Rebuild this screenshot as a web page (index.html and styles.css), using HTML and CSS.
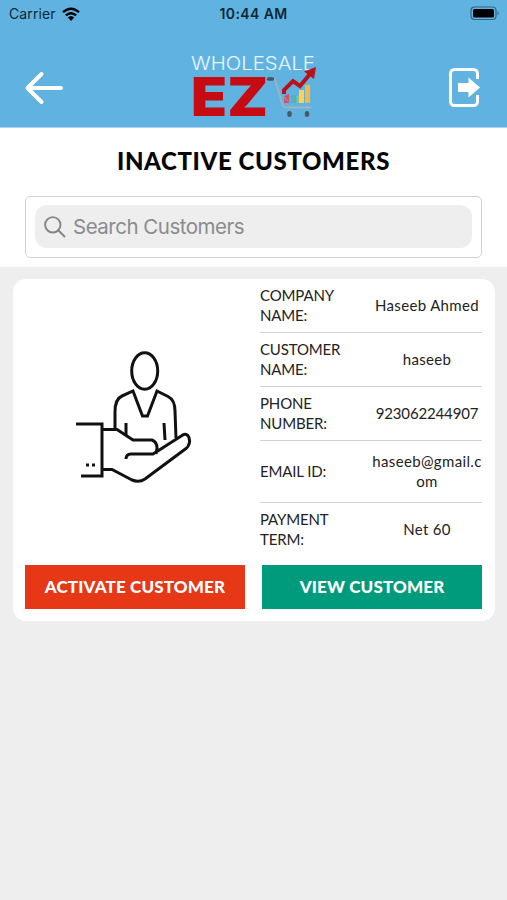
FILE: index.html
```html
<!DOCTYPE html>
<html lang="en">
<head>
<meta charset="utf-8">
<title>Inactive Customers</title>
<link rel="stylesheet" href="styles.css">
</head>
<body>
<header class="header">
  <div class="status">
    <div class="carrier"><span class="carrier-name">Carrier</span>
      <svg width="18" height="14" viewBox="0 0 18 14" fill="none" stroke="#000" stroke-width="2.4"><path d="M1 5.2Q9-1.8 17 5.2M3.800 8.400Q9 4 14.200 8.400"/><path d="M5.800 10.600Q9 7.600 12.200 10.600L9 14z" fill="#000" stroke="none"/></svg>
    </div>
    <span class="time">10:44 AM</span>
    <svg class="battery" width="31" height="15" viewBox="0 0 31 15"><rect x="1" y="1" width="25" height="12.5" rx="3.5" fill="none" stroke="#35657e" stroke-width="1.2"/><rect x="3" y="3" width="21" height="8.5" rx="1.5"/><path d="M27.5 5Q30 7.2 27.5 9.5z" fill="#35657e"/></svg>
  </div>
  <div class="nav">
    <svg class="back" width="40" height="34" viewBox="0 0 40 34" fill="none" stroke="#fff" stroke-width="4" stroke-linecap="round" stroke-linejoin="round"><path d="M37 17H4M17.5 3L3.5 17l14 14"/></svg>
    <svg class="logo" width="128" height="66" viewBox="0 0 128 66">
      <text class="logo-top" x="2" y="18.500" textLength="124" lengthAdjust="spacingAndGlyphs">WHOLESALE</text>
      <text class="logo-main" transform="translate(0 64.500) scale(1.400 1)" x="1.500" y="0" textLength="55" lengthAdjust="spacingAndGlyphs">EZ</text>
      <path d="M82 27.500q4 0 5 4l6 21q1 4 5 4h24" fill="none" stroke="#9fb4c0" stroke-width="1.800"/>
      <path d="M79.500 28h4" stroke="#45565f" stroke-width="3.400" stroke-linecap="round"/>
      <path d="M95 47l6 5h-6z" fill="#e14b64"/><path d="M95 45l5-2v8z" fill="#e14b64"/><path d="M102 44h5v8h-5z" fill="#4cb7b4"/><path d="M108 45h5v7h-5z" fill="#9cc06a"/><path d="M110 39h5v13h-5z" fill="#ffd05c"/><path d="M116 34h5v18h-5z" fill="#f4b943"/>
      <path d="M95 43V39L104 30l7 5 10-12" fill="none" stroke="#b9121b" stroke-width="4"/><path d="M115 20.500l12-4.500-2 12z" fill="#b9121b"/>
      <ellipse cx="100.500" cy="63" rx="2.300" ry="2.900" fill="#4b5960"/><ellipse cx="118" cy="63" rx="2.300" ry="2.900" fill="#4b5960"/>
    </svg>
    <svg class="exit" width="32" height="40" viewBox="0 0 32 40"><path d="M28.500 11V5.500a4 4 0 0 0-4-4h-19a4 4 0 0 0-4 4v28a4 4 0 0 0 4 4h19a4 4 0 0 0 4-4V27" fill="none" stroke="#fff" stroke-width="3"/><path d="M9 15h10.500V9.500L31 19.500 19.500 29.500V24H9z" fill="#fff"/></svg>
  </div>
</header>
<section class="top">
  <h1 class="title">INACTIVE CUSTOMERS</h1>
  <div class="search-box">
    <div class="search">
      <svg width="22" height="22" viewBox="0 0 22 22" fill="none" stroke="#858587" stroke-width="1.9" stroke-linecap="round"><circle cx="8.8" cy="8.8" r="7.7"/><path d="M14.5 14.5l6 6"/></svg>
      <span class="placeholder">Search Customers</span>
    </div>
  </div>
</section>
<main class="card">
  <div class="info">
    <div class="picture">
      <svg width="118" height="136" viewBox="0 0 118 136" fill="none" stroke="#111" stroke-width="3">
        <ellipse cx="69.7" cy="21" rx="13" ry="18.2"/>
        <path d="M40 79V62Q40 49 47 46L58 41 67.500 66h5L82 41l11 5.500Q100 50 100 61l1 27M51 73v13M89 73l1 17"/>
        <path d="M1 74h26v52H6M27 79.500h15L58 90h19q5 2 5 8l-1 6M51 109q0-5 5-5h22L107 85.500q5-3 7 2 2 7-3 11L70 129q-6 4-13 1L37 119.500H27"/>
        <path d="M11 115h3M17 115h3"/>
      </svg>
    </div>
    <div class="details">
      <div class="row"><span class="label">COMPANY<br>NAME:</span><span class="value">Haseeb Ahmed</span></div>
      <div class="row"><span class="label">CUSTOMER<br>NAME:</span><span class="value">haseeb</span></div>
      <div class="row"><span class="label">PHONE<br>NUMBER:</span><span class="value number">923062244907</span></div>
      <div class="row tall"><span class="label">EMAIL ID:</span><span class="value">haseeb@gmail.c<br>om</span></div>
      <div class="row"><span class="label">PAYMENT<br>TERM:</span><span class="value">Net 60</span></div>
    </div>
  </div>
  <div class="actions">
    <button class="btn activate">ACTIVATE CUSTOMER</button>
    <button class="btn view">VIEW CUSTOMER</button>
  </div>
</main>
</body>
</html>
```
FILE: styles.css
```css
* { box-sizing: border-box; }
body { margin: 0; min-height: 900px; background: #eee; font-family: Lato, sans-serif; color: #222; }
.header { height: 128px; background: #60b3e0; border-bottom: 1px solid #a8d4ed; }
.status { display: grid; grid-template-columns: 1fr auto 1fr; align-items: center; height: 27px; padding: 0 6px 0 9px; font-family: Inter, sans-serif; font-size: 14px; color: #102735; }
.carrier { display: flex; align-items: center; gap: 6px; }
.carrier-name { letter-spacing: 0.1px; }
.time { margin-right: 3px; font-weight: 600; font-size: 14px; letter-spacing: 0.4px; }
.battery { justify-self: end; }
.nav { display: grid; grid-template-columns: 1fr auto 1fr; align-items: center; height: 99px; padding: 22px 26px 0 24px; }
.logo { margin-top: -8px; overflow: visible; }
.exit { justify-self: end; }
.logo-top { font: 300 18px Inter, sans-serif; fill: #e8f7ff; }
.logo-main { font: 900 54px Inter, sans-serif; fill: #c60c12; }
.top { height: 139px; padding: 0 25px; background: #fff; }
.title { margin: 0; height: 68px; line-height: 66px; text-align: center; font-size: 24px; font-weight: 900; letter-spacing: 0.620px; color: #050505; white-space: nowrap; }
.search-box { height: 62px; padding: 8px 9px 9px 9px; border: 1px solid #d2d2d2; border-radius: 5px; }
.search { display: flex; align-items: center; gap: 7px; height: 43px; padding-left: 9px; border-radius: 12px; background: #eee; }
.placeholder { font: 20.500px Inter, sans-serif; letter-spacing: -0.500px; color: #8b8b8d; }
.card { margin: 12px 12px 0 13px; height: 342px; padding: 0 13px 12px 12px; border-radius: 13px; background: #fff; }
.info { display: flex; height: 286px; }
.picture { width: 235px; padding: 71px 0 0 50px; }
.details { width: 222px; }
.row { display: flex; align-items: center; height: 54.400px; padding-bottom: 1px; border-bottom: 1.500px solid #d2d2d2; font-size: 15px; line-height: 20px; }
.row:first-child { height: 53.500px; }
.row.tall { height: 61.500px; }
.row:last-child { border: 0; }
.label { width: 112px; letter-spacing: -0.150px; }
.value { width: 110px; text-align: center; white-space: nowrap; letter-spacing: 0.340px; }
.value.number { letter-spacing: -0.150px; }
.actions { display: flex; gap: 17px; }
.btn { flex: 1; height: 44px; padding: 0 0 2px; border: 0; color: #fff; font: 900 17px Lato, sans-serif; letter-spacing: 0.150px; white-space: nowrap; }
.activate { background: #e63816; }
.view { background: #009b7d; }
```
